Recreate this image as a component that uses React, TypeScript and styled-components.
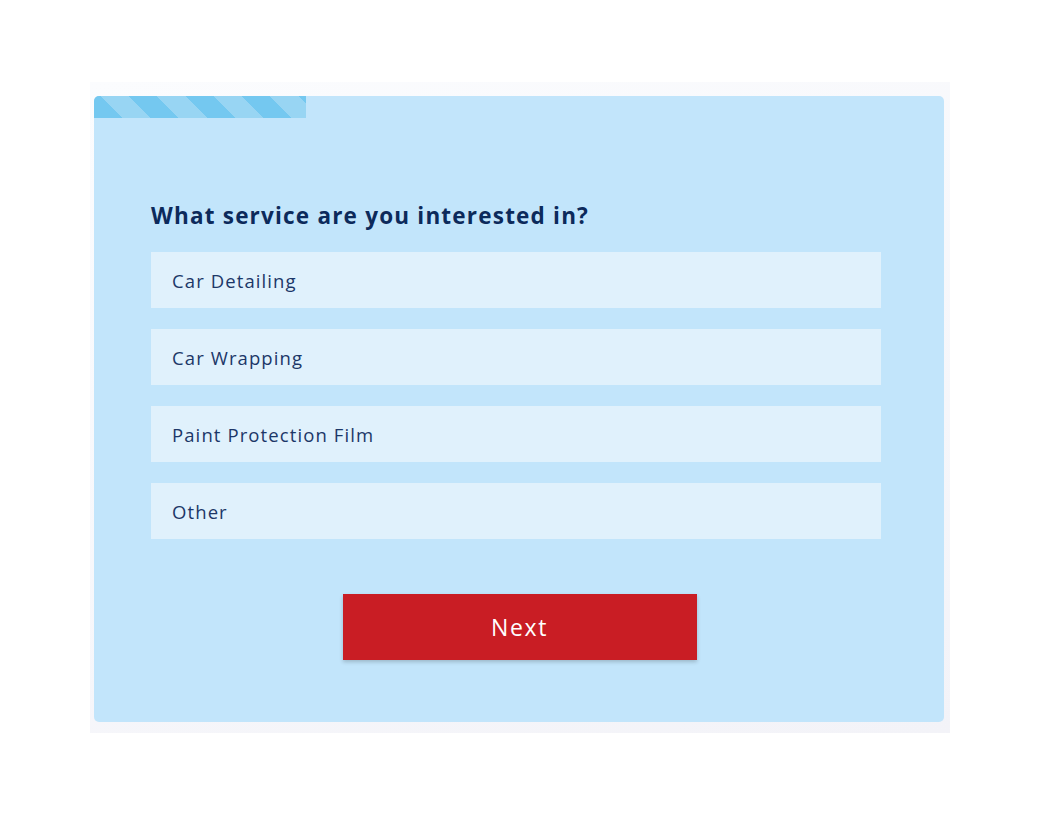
import { useState } from 'react'
import { styled, createGlobalStyle } from 'styled-components'

const GlobalStyle = createGlobalStyle`
  body {
    margin: 0;
    background: #ffffff;
    font-family: 'Open Sans', 'Liberation Sans', sans-serif;
  }
`

const Page = styled.div`
  width: 1040px;
  height: 816px;
  padding-top: 82px;
  box-sizing: border-box;
  display: flex;
  justify-content: center;
`

const Frame = styled.div`
  width: 860px;
  height: 651px;
  box-sizing: border-box;
  padding: 14px 6px 11px 4px;
  background: linear-gradient(160deg, #fbfcfe 0%, #f3f3f8 100%);
`

const Card = styled.div`
  height: 100%;
  background: #c2e5fb;
  border-radius: 5px;
  overflow: hidden;
  display: flex;
  flex-direction: column;
`

const Stripes = styled.div`
  width: 212px;
  height: 22px;
  background: repeating-linear-gradient(
    45deg,
    #74c8f0 0px,
    #74c8f0 20px,
    #98d5f3 20px,
    #98d5f3 40px
  );
`

const Body = styled.div`
  padding: 82px 63px 0 57px;
  display: flex;
  flex-direction: column;
`

const Question = styled.h2`
  margin: 0 0 20px;
  font-size: 22.5px;
  font-weight: 700;
  letter-spacing: 1.2px;
  color: #0c2a5b;
  line-height: 32px;
`

const Options = styled.div`
  display: flex;
  flex-direction: column;
  gap: 21px;
`

const Option = styled.div<{ $selected?: boolean }>`
  height: 56px;
  display: flex;
  align-items: center;
  padding-left: 21px;
  background: ${(p) => (p.$selected ? '#cfeafc' : '#e0f1fc')};
  font-size: 18.5px;
  letter-spacing: 1.1px;
  color: #1c3768;
  cursor: pointer;
`

const NextButton = styled.button`
  align-self: center;
  margin: 55px 0 0 7px;
  width: 354px;
  height: 66px;
  border: none;
  background: #c91d24;
  color: #ffffff;
  font-family: inherit;
  font-size: 23px;
  letter-spacing: 1.6px;
  box-shadow: 0 2px 4px rgba(0, 0, 0, 0.2);
  cursor: pointer;
`

const services = ['Car Detailing', 'Car Wrapping', 'Paint Protection Film', 'Other']

export default function App() {
  const [selected, setSelected] = useState<string | null>(null)

  return (
    <>
      <GlobalStyle />
      <Page>
        <Frame>
          <Card>
            <Stripes />
            <Body>
              <Question>What service are you interested in?</Question>
              <Options>
                {services.map((s) => (
                  <Option key={s} $selected={selected === s} onClick={() => setSelected(s)}>
                    {s}
                  </Option>
                ))}
              </Options>
              <NextButton>Next</NextButton>
            </Body>
          </Card>
        </Frame>
      </Page>
    </>
  )
}
